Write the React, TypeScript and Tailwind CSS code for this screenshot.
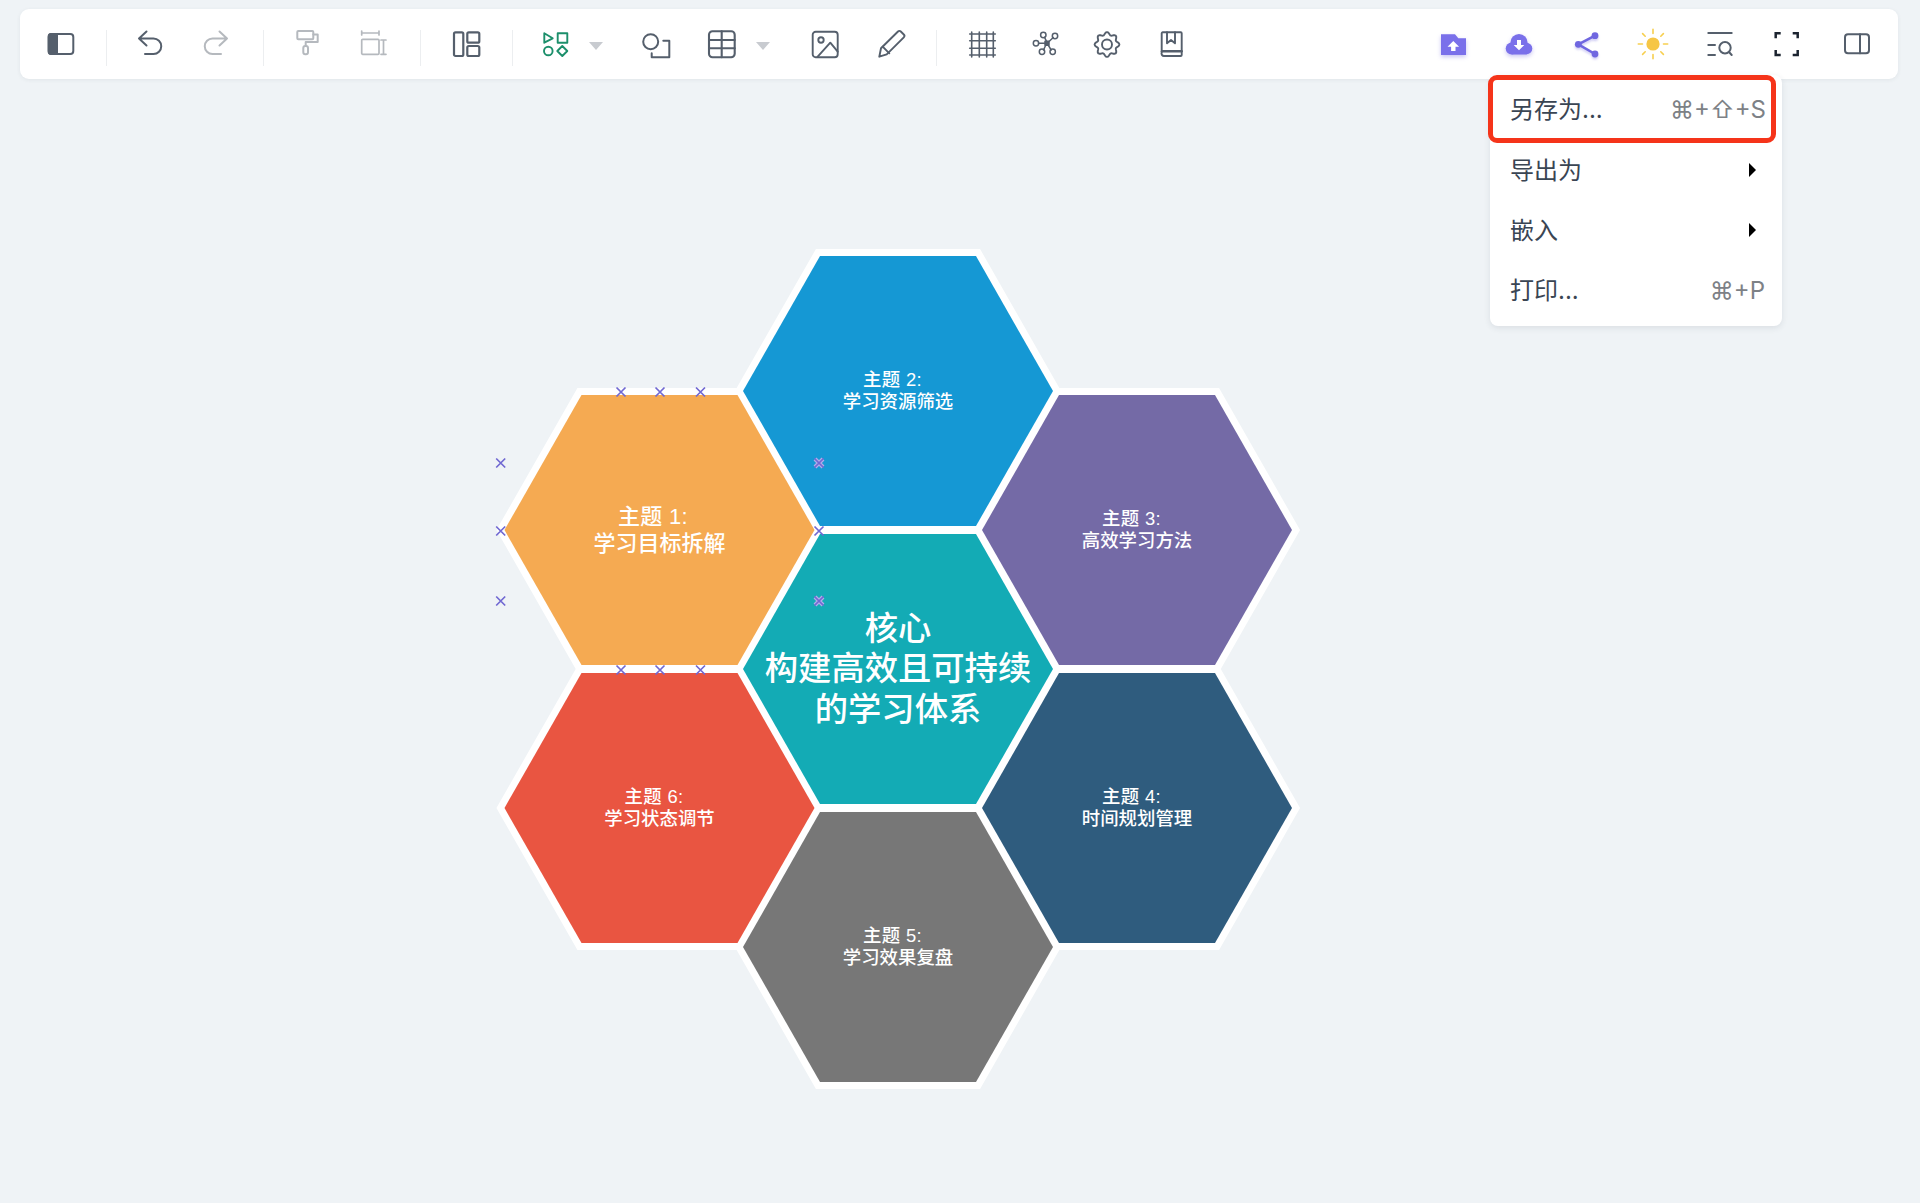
import type { ReactNode } from "react";

const uiFont = "font-['Inter','Noto_Sans_CJK_SC','DejaVu_Sans',sans-serif]";

const hexes = [
  { cx: 659.5, cy: 530, fill: "#f5aa52", size: 22, gap: 27, lines: ["主题 1:", "学习目标拆解"] },
  { cx: 898, cy: 391, fill: "#1598d4", size: 18.4, gap: 22, lines: ["主题 2:", "学习资源筛选"] },
  { cx: 1137, cy: 530, fill: "#746aa6", size: 18.4, gap: 22, lines: ["主题 3:", "高效学习方法"] },
  { cx: 1137, cy: 808, fill: "#2f5c7e", size: 18.4, gap: 22, lines: ["主题 4:", "时间规划管理"] },
  { cx: 898, cy: 947, fill: "#777777", size: 18.4, gap: 22, lines: ["主题 5:", "学习效果复盘"] },
  { cx: 659.5, cy: 808, fill: "#e95541", size: 18.4, gap: 22, lines: ["主题 6:", "学习状态调节"] },
];

const hexPoints = (cx: number, cy: number) =>
  [
    [cx - 155, cy],
    [cx - 78, cy - 135],
    [cx + 78, cy - 135],
    [cx + 155, cy],
    [cx + 78, cy + 135],
    [cx - 78, cy + 135],
  ]
    .map((p) => p.join(","))
    .join(" ");

const marks = [
  [621, 392],
  [660, 392],
  [700.5, 392],
  [621, 670],
  [660, 670],
  [700.5, 670],
  [500.7, 463],
  [500.7, 531],
  [500.7, 601],
  [819, 531],
  [819, 463],
  [819, 601],
];

// wavy outline for the settings cog
const gearPath = () => {
  const pts: string[] = [];
  for (let a = 0; a < 360; a += 5) {
    const t = (a * Math.PI) / 180;
    const r = 11 + 1.4 * Math.cos(8 * t);
    pts.push(`${(14 + r * Math.sin(t)).toFixed(2)} ${(14.5 - r * Math.cos(t)).toFixed(2)}`);
  }
  return `M${pts.join("L")}Z`;
};

function Icon({ children, tone = "text-[#555f6c]", sw = 2 }: { children: ReactNode; tone?: string; sw?: number }) {
  return (
    <svg
      viewBox="0 0 28 28"
      fill="none"
      stroke="currentColor"
      strokeWidth={sw}
      strokeLinecap="round"
      strokeLinejoin="round"
      className={`block h-7 w-7 overflow-visible ${tone}`}
    >
      {children}
    </svg>
  );
}

function Btn({ children, className = "" }: { children: ReactNode; className?: string }) {
  return <div className={`flex h-7 w-[44px] shrink-0 items-center justify-center ${className}`}>{children}</div>;
}

function Sep({ className = "" }: { className?: string }) {
  return <div className={`mt-[8px] h-[36px] w-px shrink-0 bg-[#eceef0] ${className}`} />;
}

function Caret({ className = "" }: { className?: string }) {
  return <div className={`mt-[3px] h-0 w-0 shrink-0 border-x-[7px] border-t-[8px] border-x-transparent border-t-[#c8cbd0] ${className}`} />;
}

function Toolbar() {
  const gray = "text-[#b5b9be]";
  return (
    <div className="ml-[20px] mr-[22px] mt-[9px] flex h-[70px] items-center rounded-[9px] bg-white pl-[19px] pr-[20px] shadow-[0_1px_4px_rgba(40,50,70,0.07)]">
      <Btn>
        <Icon>
          <rect x="1.7" y="4" width="24.6" height="20" rx="3" />
          <path d="M4 4h6v20H4a2.5 2.5 0 0 1-2.3-2.5v-15A2.5 2.5 0 0 1 4 4Z" fill="currentColor" />
        </Icon>
      </Btn>
      <Sep className="ml-[23px]" />
      <Btn className="ml-[20px]">
        <Icon>
          <path d="M11.5 1.5 4 8.5l7.5 7M4 8.5h14.5a7.7 7.7 0 0 1 0 15.5H10" />
        </Icon>
      </Btn>
      <Btn className="ml-[24px]">
        <Icon tone={gray}>
          <path d="M16.5 1.5 24 8.5l-7.5 7M24 8.5H9.5a7.7 7.7 0 0 0 0 15.5H18" />
        </Icon>
      </Btn>
      <Sep className="ml-[24px]" />
      <Btn className="ml-[21px]">
        <Icon tone={gray}>
          <rect x="4.3" y="1" width="16" height="8.3" rx="1" />
          <path d="M20.3 4.5h4.4v7.5H12.7V16" />
          <rect x="10.3" y="16" width="4.7" height="8.3" rx="2" />
        </Icon>
      </Btn>
      <Btn className="ml-[22px]">
        <Icon tone={gray} sw={1.7}>
          <path d="M2.7 1v4M20 1v4M2.7 3h17.3" />
          <rect x="2.7" y="9.3" width="17.3" height="15" rx="1" />
          <path d="M24.5 10v14.3M22 10h5M22 24.3h5" />
        </Icon>
      </Btn>
      <Sep className="ml-[25px]" />
      <Btn className="ml-[23px]">
        <Icon sw={2.2}>
          <rect x="2" y="2.3" width="9.3" height="23.7" rx="1.5" />
          <rect x="15.3" y="2.3" width="12" height="10.4" rx="1.5" />
          <rect x="15.3" y="16" width="12" height="10" rx="1.5" />
        </Icon>
      </Btn>
      <Sep className="ml-[24px]" />
      <Btn className="ml-[21px]">
        <Icon tone="text-[#1c8f6b]" sw={1.9}>
          <path d="M2.3 3.3 10.7 8.3 2.3 12.7Z" />
          <rect x="15.7" y="3.3" width="9.6" height="9.4" />
          <circle cx="6.3" cy="21" r="4.3" />
          <path d="M20.3 16 25.3 21 20.3 26 15.3 21Z" />
        </Icon>
      </Btn>
      <Caret className="ml-[11px]" />
      <Btn className="ml-[31px]">
        <Icon>
          <circle cx="8.7" cy="11.7" r="7.5" />
          <path d="M21.3 10.7h6v16.6H9.7v-4" />
        </Icon>
      </Btn>
      <Btn className="ml-[22px]">
        <Icon sw={2.1}>
          <rect x="1" y="1.3" width="25.7" height="26" rx="3.5" />
          <path d="M1 10h25.7M1 18.3h25.7M13.7 1.3v26" />
        </Icon>
      </Btn>
      <Caret className="ml-[12px]" />
      <Btn className="ml-[33px]">
        <Icon sw={1.9}>
          <rect x="1.7" y="1.7" width="25" height="25.6" rx="3" />
          <circle cx="10" cy="10" r="2.7" />
          <path d="M6.7 26.7 19.3 12.7l7.4 9" />
        </Icon>
      </Btn>
      <Btn className="ml-[22px]">
        <Icon sw={1.9}>
          <path d="M2.3 26.7 4 18.3 21 1.5c.8-.8 2-.8 2.8 0l3 3c.8.8.8 2 0 2.8L9.7 24.3Z" />
          <path d="M5.7 16.7 12.3 23.3" />
        </Icon>
      </Btn>
      <Sep className="ml-[23px]" />
      <Btn className="ml-[23px]">
        <Icon sw={1.6}>
          <path d="M3.7 2v25M11.3 2v25M18.7 2v25M25.3 2v25M1.7 4h25.6M1.7 10.7h25.6M1.7 18.3h25.6M1.7 25h25.6" />
        </Icon>
      </Btn>
      <Btn className="ml-[18px]">
        <Icon sw={1.5}>
          <path d="M8.5 13.3H15M14.5 7.2l2 4.2M23.3 7.5l-4.8 4.5M21.2 20l-3-4.8M13.5 20l2.2-4.8" />
          <circle cx="6" cy="13.3" r="2.7" />
          <circle cx="13.3" cy="5" r="2.7" />
          <circle cx="25" cy="6" r="2.7" />
          <circle cx="22.7" cy="21.7" r="2.7" />
          <circle cx="12" cy="21.7" r="2.7" />
          <rect x="15" y="11.3" width="4" height="4" fill="currentColor" />
        </Icon>
      </Btn>
      <Btn className="ml-[19px]">
        <Icon sw={1.9}>
          <path d={gearPath()} />
          <circle cx="14" cy="14.5" r="5" />
        </Icon>
      </Btn>
      <Btn className="ml-[21px]">
        <Icon sw={1.9}>
          <path d="M3.7 22.5V3.3a1 1 0 0 1 1-1h18a1 1 0 0 1 1 1V25a1 1 0 0 1-1 1H6a2.5 2.5 0 0 1-2.3-3.5Z" />
          <path d="M4 21.2h19.7" strokeWidth="2.4" />
          <path d="M9 2.3v11l4-3.3 4 3.3v-11" />
        </Icon>
      </Btn>

      <Btn className="ml-auto">
        <Icon tone="text-[#7a70ea]" sw={0}>
          <g className="drop-shadow-[0_2px_2px_rgba(100,90,220,0.35)]">
            <path d="M2 4.3h14l3.3 4H27V25H2Z" fill="currentColor" />
            <path d="M8.5 16.7 14.3 11l5.8 5.7h-3.6V21h-4.4v-4.3Z" fill="#ffffff" />
          </g>
        </Icon>
      </Btn>
      <Btn className="ml-[21px]">
        <Icon tone="text-[#7a70ea]" sw={0}>
          <g className="drop-shadow-[0_2px_2px_rgba(100,90,220,0.35)]">
            <circle cx="15" cy="12.7" r="8.6" fill="currentColor" />
            <circle cx="7.7" cy="18.5" r="6" fill="currentColor" />
            <circle cx="22.5" cy="18.5" r="5.8" fill="currentColor" />
            <rect x="7.7" y="15" width="15" height="9.5" fill="currentColor" />
            <path d="M13 10h4v5h3.3L15 20.3 9.7 15H13Z" fill="#ffffff" />
          </g>
        </Icon>
      </Btn>
      <Btn className="ml-[24px]">
        <Icon tone="text-[#6f66e0]" sw={2.6}>
          <g className="drop-shadow-[0_2px_1px_rgba(100,90,220,0.3)]">
            <path d="M23 5.7 6.3 14.3 23 24" />
            <circle cx="6.3" cy="14.3" r="3.4" fill="currentColor" strokeWidth="0" />
            <circle cx="23" cy="5.7" r="3.4" fill="currentColor" strokeWidth="0" />
            <circle cx="23" cy="24" r="3.4" fill="currentColor" strokeWidth="0" />
          </g>
        </Icon>
      </Btn>
      <Btn className="ml-[23px]">
        <Icon tone="text-[#f7cf4f]" sw={1.6}>
          <circle cx="14" cy="14" r="6.6" fill="#f6c645" strokeWidth="0" />
          <path d="M14 -0.7v4.2M14 24.5v4.2M-0.7 14h4.2M24.5 14h4.2M3.6 3.6l2.6 2.6M21.8 21.8l2.6 2.6M3.6 24.4l2.6-2.6M21.8 6.2l2.6-2.6" />
        </Icon>
      </Btn>
      <Btn className="ml-[22px]">
        <Icon sw={2}>
          <path d="M3.3 3h23.4M3.3 15H10M3.3 25H10" />
          <circle cx="20" cy="17.7" r="5.7" />
          <path d="M24 22l2.7 3" />
        </Icon>
      </Btn>
      <Btn className="ml-[23px]">
        <Icon tone="text-[#1c2430]" sw={2.5}>
          <path d="M3.7 8.3v-5h5M20.7 3.3h5v5M25.7 20v5h-5M8.7 25h-5v-5" strokeLinecap="butt" strokeLinejoin="miter" />
        </Icon>
      </Btn>
      <Btn className="ml-[26px]">
        <Icon sw={2}>
          <rect x="3" y="4.3" width="24" height="19" rx="3" />
          <path d="M18 4.3v19" />
        </Icon>
      </Btn>
    </div>
  );
}

function Arrow() {
  return <div className="h-0 w-0 border-y-[7px] border-l-[7px] border-y-transparent border-l-black" />;
}

function Menu() {
  return (
    <div className={`absolute left-[1488px] top-[75px] z-10 w-[294px] text-[24px] leading-none text-[#3a4553] ${uiFont}`}>
      <div className="absolute inset-y-0 left-[2px] right-0 rounded-[8px] bg-white shadow-[0_2px_6px_rgba(40,50,70,0.1)]" />
      <div className="relative pb-[6px]">
        <div className="flex h-[68px] w-[288px] items-center justify-between rounded-[9px] border-[5px] border-[#f5341a] pl-[17px] pr-[5px] pt-[2px]">
          <span>另存为...</span>
          <span className="text-[#7d8186]">⌘+⇧+S</span>
        </div>
        <div className="-mt-[3px] flex h-[60px] items-center justify-between pl-[22px] pr-[26px]">
          <span className="pt-[2px]">导出为</span>
          <Arrow />
        </div>
        <div className="flex h-[60px] items-center justify-between pl-[22px] pr-[26px]">
          <span className="pt-[2px]">嵌入</span>
          <Arrow />
        </div>
        <div className="flex h-[60px] items-center justify-between pl-[22px] pr-[17px] pt-[2px]">
          <span>打印...</span>
          <span className="text-[#7d8186]">⌘+P</span>
        </div>
      </div>
    </div>
  );
}

function Diagram() {
  return (
    <svg
      viewBox="490 240 660 860"
      className="ml-[490px] mt-[161px] block h-[860px] w-[660px] self-start overflow-visible font-['Liberation_Sans','Noto_Sans_CJK_SC',sans-serif] font-medium"
    >
      {/* white rims go first so no rim paints over a neighbour's fill */}
      {[...hexes, { cx: 898, cy: 669 }].map((h, i) => (
        <polygon key={i} points={hexPoints(h.cx, h.cy)} fill="#ffffff" stroke="#ffffff" strokeWidth="14" />
      ))}
      {hexes.map((h) => (
        <g key={h.lines[0]}>
          <polygon points={hexPoints(h.cx, h.cy)} fill={h.fill} />
          <text x={h.cx - h.size * 0.3} y={h.cy - h.gap / 2 - 0.5} letterSpacing="0.3" textAnchor="middle" dominantBaseline="central" fill="#ffffff" fontSize={h.size}>
            {h.lines[0]}
          </text>
          <text x={h.cx} y={h.cy + h.gap / 2 - 0.5} textAnchor="middle" dominantBaseline="central" fill="#ffffff" fontSize={h.size}>
            {h.lines[1]}
          </text>
        </g>
      ))}
      <polygon points={hexPoints(898, 669)} fill="#13abb5" />
      {["核心", "构建高效且可持续", "的学习体系"].map((t, i) => (
        <text key={t} x="898" y={628 + i * 40.5} textAnchor="middle" dominantBaseline="central" fill="#ffffff" fontSize="33.3">
          {t}
        </text>
      ))}
      {marks.map(([x, y], i) => (
        <g key={i}>
          {i > 9 && <path d={`M${x - 4} ${y - 4}l8 8M${x + 4} ${y - 4}l-8 8`} stroke="#b3ade8" strokeWidth="4" />}
          <path d={`M${x - 4.5} ${y - 4.5}l9 9M${x + 4.5} ${y - 4.5}l-9 9`} stroke="#7068d2" strokeWidth="1.7" />
        </g>
      ))}
    </svg>
  );
}

export default function App() {
  return (
    <div className="relative flex h-[1203px] w-[1920px] flex-col overflow-hidden bg-[#eff3f6]">
      <Toolbar />
      <Menu />
      <Diagram />
    </div>
  );
}
